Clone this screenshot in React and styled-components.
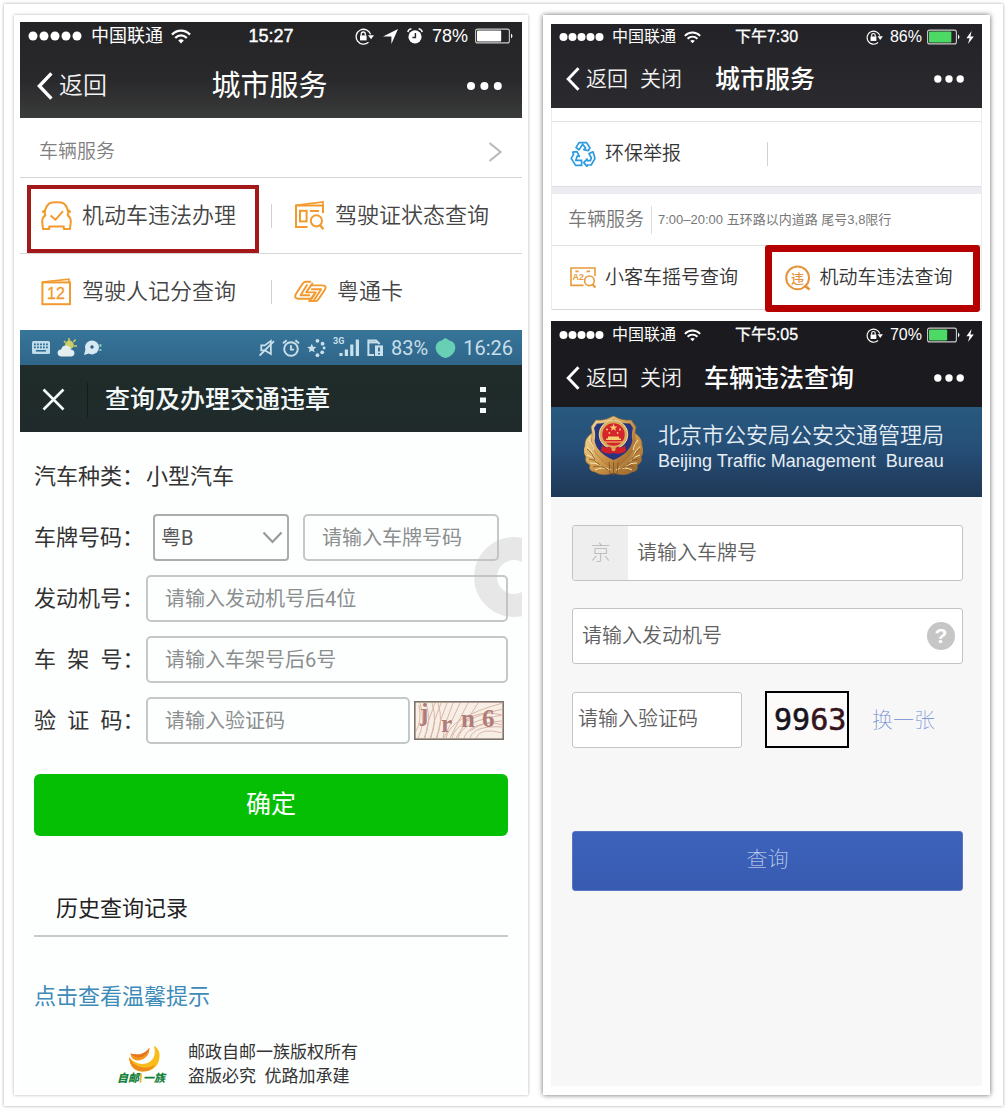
import React, { useState } from 'react'
import styled, { createGlobalStyle, css } from 'styled-components'

const GlobalStyle = createGlobalStyle`
    * {
        box-sizing: border-box;
    }

    body {
        margin: 0;
        background: #fff;
        font-family: 'Liberation Sans', 'Noto Sans CJK SC', sans-serif;
        color: #444;
    }

    button, input, select {
        font-family: inherit;
    }

    svg {
        display: block;
        flex: none;
    }
`

/* ---------- page ---------- */

const Frame = styled.main`
    display: grid;
    grid-template-columns: 514fr 447fr;
    gap: 15px;
    margin: 4px;
    padding: 11px 13px 11px 10px;
    background: #fff;
    box-shadow: 0 0 3px rgba(0, 0, 0, 0.35);
`

const Card = styled.section`
    display: flex;
    flex-direction: column;
    min-width: 0;
    padding: ${props => props.$raised ? '9px 8px' : '7px 6px'};
    background: #fff;
    box-shadow: ${props => props.$raised ? '0 0 5px rgba(0, 0, 0, 0.6)' : '0 0 3px rgba(0, 0, 0, 0.3)'};
`

/* ---------- iOS header ---------- */

const Header = styled.header`
    background: ${props => props.$background};
    color: #fff;
`

const StatusBar = styled.div`
    display: grid;
    grid-template-columns: 1fr auto 1fr;
    align-items: center;
    height: ${props => props.$large || props.$roomy ? 28 : 26}px;
    padding: 0 8px;
    font-size: ${props => props.$large ? 18 : 16}px;
    line-height: 24px;
`

const StatusGroup = styled.div`
    display: flex;
    align-items: center;
    gap: 8px;
    ${props => props.$end && css`
        justify-content: flex-end;
        gap: ${props.$large ? 9 : 7}px;
    `}
`

const Clock = styled.time`
    -webkit-text-stroke: ${props => props.$large ? '0.4px' : '0.3px'} #fff;
`

const Power = styled.div`
    display: flex;
    align-items: center;
    gap: ${props => props.$large ? 7 : 5}px;
`

const NavBar = styled.nav`
    display: grid;
    grid-template-columns: 1fr auto 1fr;
    align-items: center;
    height: ${props => props.$large ? 68 : 58}px;
    padding: ${props => props.$large ? '4px 20px 0 17px' : '0 18px 0 15px'};
`

const NavActions = styled.div`
    display: flex;
    align-items: center;
    gap: 12px;
    padding-right: 22px;
`

const NavButton = styled.button`
    display: flex;
    align-items: center;
    gap: 6px;
    padding: 0;
    border: 0;
    background: none;
    color: #f2f2f2;
    font-size: ${props => props.$large ? 24 : 21}px;
    line-height: 32px;
    font-weight: 350;
    white-space: nowrap;
`

const MoreButton = styled.button`
    justify-self: end;
    padding: 8px 0;
    border: 0;
    background: none;
`

const NavTitle = styled.h1`
    margin: 0;
    font-size: ${props => props.$large ? 29 : 25}px;
    line-height: 36px;
    font-weight: ${props => props.$large ? 400 : 500};
    white-space: nowrap;
`

const SignalDots = ({ large }) => {
    const r = large ? 4.5 : 4
    const pitch = large ? 11 : 9
    return (
        <svg width={pitch * 5} height="10">
            {[0, 1, 2, 3, 4].map(i => (
                <circle key={i} cx={pitch * i + r + 0.5} cy="5" r={r} fill="#fff" />
            ))}
        </svg>
    )
}

const Wifi = ({ large }) => (
    <svg width={large ? 20 : 17} height={large ? 15 : 13} viewBox="0 0 20 15" fill="none" stroke="#fff" strokeWidth="2.3">
        <path d="M1 5.6C6 .4 14 .4 19 5.6" />
        <path d="M4.2 9C7.6 5.6 12.4 5.6 15.8 9" />
        <path d="M7.2 11.4C9 10 11 10 12.8 11.4L10 14.4Z" fill="#fff" stroke="none" />
    </svg>
)

const RotationLock = ({ large }) => (
    <svg width={large ? 19 : 17} height={large ? 17 : 15} viewBox="0 0 19 17" fill="none" stroke="#fff" strokeWidth="1.3">
        <path d="M13.5 14.2A7.4 7.4 0 1 1 15.6 6.4" />
        <path d="M13 7.2h6l-3 4z" fill="#fff" stroke="none" />
        <rect x="5" y="7.4" width="6.6" height="5" fill="#fff" stroke="none" />
        <path d="M6.3 7.6V6a2 2 0 0 1 4 0v1.6" />
    </svg>
)

const LocationArrow = () => (
    <svg width="15" height="15" viewBox="0 0 15 15">
        <path d="M15 0L8.4 15V7.6H0Z" fill="#fff" />
    </svg>
)

const AlarmSolid = () => (
    <svg width="16" height="16" viewBox="0 0 16 16">
        <circle cx="8" cy="8.8" r="6.6" fill="#fff" />
        <path d="M8.4 5v4.4H5.4" fill="none" stroke="#28282a" strokeWidth="1.5" />
        <path d="M.8 4.2C1.2 2 2.6 1 4.4.8M15.2 4.2C14.8 2 13.4 1 11.6.8" fill="none" stroke="#fff" strokeWidth="1.4" />
    </svg>
)

const Battery = ({ level, large, charging }) => {
    const w = large ? 35 : 30
    return (
        <svg width={w + 4} height="16" viewBox={`0 0 ${w + 4} 16`}>
            <rect x=".6" y="1.1" width={w - 1.2} height="13.8" rx="2" fill="none" stroke="#ccc" strokeWidth="1.1" />
            <rect x="2" y="2.4" width={(w - 4) * level} height="11.2" rx="1" fill={charging ? '#4cd964' : '#fff'} />
            <path d={`M${w + 1} 5.6q3 2.4 0 4.8z`} fill="#fff" />
        </svg>
    )
}

const Bolt = () => (
    <svg width="8" height="13" viewBox="0 0 8 13">
        <path d="M5.6 0L.4 7.2H3.6L2 13L7.8 5.4H4.4Z" fill="#fff" />
    </svg>
)

const BackChevron = ({ large }) => (
    <svg width={large ? 16 : 14} height={large ? 28 : 24} viewBox="0 0 16 28">
        <path d="M14.4 1.4L2.4 14L14.4 26.6" fill="none" stroke="#fff" strokeWidth="3.4" />
    </svg>
)

const MoreDots = ({ large }) => (
    <svg width={large ? 35 : 30} height="8" viewBox={large ? '0 0 35 8' : '0 0 30 8'} fill="#fff">
        {[0, 1, 2].map(i => (
            <circle key={i} cx={large ? 4 + 13.4 * i : 3.8 + 11.2 * i} cy="4" r={large ? 4 : 3.7} />
        ))}
    </svg>
)

const PhoneHeader = ({ large, roomy, background, time, percent, charging, title, closable }) => (
    <Header $background={background}>
        <StatusBar $large={large} $roomy={roomy}>
            <StatusGroup>
                <SignalDots large={large} />
                <span>中国联通</span>
                <Wifi large={large} />
            </StatusGroup>
            <Clock $large={large}>{time}</Clock>
            <StatusGroup $end $large={large}>
                <RotationLock large={large} />
                {large && <LocationArrow />}
                {large && <AlarmSolid />}
                <Power $large={large}>
                    <span>{percent}%</span>
                    <Battery level={percent / 100} large={large} charging={charging} />
                    {charging && <Bolt />}
                </Power>
            </StatusGroup>
        </StatusBar>
        <NavBar $large={large}>
            <NavActions>
                <NavButton type="button" $large={large}>
                    <BackChevron large={large} />
                    返回
                </NavButton>
                {closable && <NavButton type="button">关闭</NavButton>}
            </NavActions>
            <NavTitle $large={large}>{title}</NavTitle>
            <MoreButton type="button" aria-label="更多">
                <MoreDots large={large} />
            </MoreButton>
        </NavBar>
    </Header>
)

/* ---------- service lists ---------- */

const SectionRow = styled.a`
    display: flex;
    align-items: center;
    justify-content: space-between;
    height: 60px;
    padding: 8px 20px 0 19px;
    border-bottom: 1px solid #d6d6d6;
    color: #808080;
    font-size: 19px;
    line-height: 28px;
    font-weight: 350;
    text-decoration: none;
`

const Services = styled.div`
    display: grid;
    grid-template-columns: 1fr 1fr;
    border-bottom: 1px solid ${props => props.$last ? 'transparent' : '#d6d6d6'};
`

const Service = styled.a`
    position: relative;
    display: flex;
    align-items: center;
    gap: ${props => props.$small ? 9 : 10}px;
    height: ${props => props.$small ? 63 : 75}px;
    padding-left: ${props => props.$small ? 18 : 21}px;
    color: ${props => props.$small ? '#333' : '#444'};
    font-size: ${props => props.$small ? 19 : 22}px;
    line-height: 32px;
    font-weight: 350;
    text-decoration: none;
    white-space: nowrap;

    &:last-child {
        padding-left: ${props => props.$small ? 18 : 23}px;
    }

    &:last-child::before {
        content: '';
        position: absolute;
        left: 0;
        width: 1px;
        height: 24px;
        background: #d2d2d2;
    }
`

const Marker = styled.span`
    position: absolute;
    pointer-events: none;
    ${props => props.$bold ? css`
        inset: -1px 1px -3px -2px;
        border: 7px solid #b60000;
        border-radius: 3px;
    ` : css`
        inset: 7px 12px 0 7px;
        border: 4px solid #a3181b;
    `}
`

const ListPanel = styled.div`
    margin-bottom: 11px;
    padding-top: 13px;
    border: solid #ececec;
    border-width: 0 1px;
`

const Divided = styled.div`
    border-top: 1px solid #e2e2e2;
`

const Band = styled.div`
    height: 8px;
    border-top: 1px solid #dcdce2;
    background: #ebebf1;
`

const NoticeRow = styled.div`
    display: flex;
    align-items: center;
    gap: 7px;
    height: 51px;
    padding-left: 16px;
    color: #777;
    font-size: 19px;
    line-height: 28px;
    font-weight: 350;
    white-space: nowrap;
`

const Notice = styled.span`
    padding-left: 6px;
    border-left: 1px solid #ddd;
    font-size: 13px;
    font-weight: 400;
`

const CarIcon = () => (
    <svg width="31" height="30" viewBox="0 0 31 30" fill="none" stroke="#f29a2e" strokeWidth="2" strokeLinejoin="round">
        <path d="M3.8 11.4C4.8 5 6.6 2 11 1.4Q15.500 1 20 1.400C24.400 2 26.200 5 27.200 11.400" />
        <path d="M3.8 11.4L4.2 14.4C2 16 1.2 17.4 1.2 20.6L2 28H8.2V25.4H22.8V28H29L29.8 20.6C29.8 17.4 29 16 26.8 14.4L27.2 11.4" />
        <path d="M1.4 11.4L4.4 9.400M29.600 11.400L26.600 9.400" strokeWidth="2.6" />
        <path d="M9.6 14.6L14.4 18.8L22 10.2" />
    </svg>
)

const LicenceIcon = () => (
    <svg width="31" height="30" viewBox="0 0 31 30" fill="none" stroke="#f29a2e" strokeWidth="2">
        <path d="M13.6 26H2V4.6H29V12" />
        <path d="M2 4.4L29 1V4.6" strokeWidth="1.6" />
        <rect x="6" y="9.8" width="6.6" height="10.6" />
        <path d="M16 10H25" />
        <circle cx="22.4" cy="19.8" r="5.6" />
        <path d="M26 24L29.4 28.2" strokeWidth="2.4" />
    </svg>
)

const PointsIcon = () => (
    <svg width="31" height="30" viewBox="0 0 31 30" fill="none" stroke="#f29a2e" strokeWidth="2">
        <rect x="1.4" y="5.4" width="27.6" height="21.8" />
        <path d="M1.4 5L28 2.2V5" strokeWidth="1.6" />
        <text x="15" y="22" textAnchor="middle" fontSize="16" fill="#f29a2e" stroke="#f29a2e" strokeWidth=".3">12</text>
    </svg>
)

const CardPassIcon = () => (
    <svg width="33" height="24" viewBox="0 0 34 24" fill="none" stroke="#f29a2e" strokeWidth="2" strokeLinejoin="round">
        <path d="M17.6 1.4H12.4Q10.6 1.4 9.2 3L1.8 14.4Q0 18.4 4 19H18.4L22.4 12.4H12.6L19.4 2.6" />
        <path d="M16.8 5.2H29.4Q34 5.4 31.8 9.6L25.4 19.2Q24 21.4 22 21.4H15.6L21 14.2" />
        <path d="M13.6 4.2L6.8 15.4H16.6M17.6 9.2H28L19.6 22" />
    </svg>
)

const RecycleIcon = () => (
    <svg width="26" height="26" viewBox="0 0 26 26" fill="none" stroke="#2c9ae0" strokeWidth="1.7" strokeLinejoin="round">
        <path d="M6 6.6L9 1.6H16.6L20 7L18.2 9.6L13.8 8.6L15.6 6.8L12.6 3.4L9 8.8Z" />
        <path d="M2.6 11.2L7 10.6L9.4 15.4L7.2 15L5.8 19.4H11.6V24.4H5.6L1.2 17.4L3.6 13.4Z" />
        <path d="M19 12.6L23 10.8L25 17.4L21.2 24H17V25.4L13.8 21.6L17 18V19.6H20.4L21.4 17Z" />
    </svg>
)

const LotteryIcon = () => (
    <svg width="26" height="22" viewBox="0 0 26 22" fill="none" stroke="#e99a3a" strokeWidth="1.6">
        <path d="M13.6 18.4H1V1H25V9" />
        <path d="M5.4 4.4H8.6M16.6 4.4H20" />
        <text x="2.6" y="13.4" fontSize="9" fontWeight="700" fill="#e99a3a" stroke="none">A2</text>
        <circle cx="19.4" cy="13.8" r="4.8" />
        <path d="M22.6 17.4L25.4 20.6" strokeWidth="2.2" />
    </svg>
)

const ViolationIcon = () => (
    <svg width="26" height="26" viewBox="0 0 26 26" fill="none" stroke="#e5933a" strokeWidth="2">
        <circle cx="12.6" cy="12.8" r="11.4" />
        <path d="M19.4 20.4L24.6 24.6" strokeWidth="2.6" />
        <text x="12.6" y="17.6" textAnchor="middle" fontSize="13" fontWeight="500" fill="#e5933a" stroke="none">违</text>
    </svg>
)

/* ---------- Android screen ---------- */

const Screen = styled.div`
    position: relative;
    flex: 1;
    overflow: hidden;
    background: #fdfefe;
    font-family: Roboto, 'Noto Sans CJK SC', sans-serif;
`

const AndroidStatus = styled.div`
    display: flex;
    align-items: center;
    justify-content: space-between;
    height: 35px;
    padding: 0 9px 0 12px;
    background: linear-gradient(#37759a, #2f6689);
    color: #c9dfe9;
    font-size: 20px;
    line-height: 24px;
`

const AndroidIcons = styled.div`
    display: flex;
    align-items: center;
    gap: 7px;
`

const AndroidBar = styled.header`
    display: flex;
    align-items: center;
    height: 67px;
    padding: 2px 33px 0 22px;
    background: linear-gradient(#1f2c29, #202a2b);
    color: #f3f8f8;
`

const IconButton = styled.button`
    padding: 0;
    border: 0;
    background: none;
`

const AndroidTitle = styled.h2`
    flex: 1;
    margin: 0 0 0 22px;
    padding-left: 17px;
    border-left: 1px solid #121b1a;
    font-size: 25px;
    line-height: 34px;
    font-weight: 500;
`

const QueryForm = styled.form`
    display: grid;
    grid-template-columns: 112px 1fr;
    grid-template-rows: repeat(5, 47px);
    row-gap: 14px;
    align-items: center;
    padding: 21px 14px 0;
    color: #333;
    font-size: 22px;
    line-height: 32px;
`

const FieldLabel = styled.label`
    white-space: nowrap;
`

const FieldGroup = styled.div`
    display: flex;
    align-items: center;
    min-width: 0;
    padding: ${props => props.$plate ? '0 9px 0 7px' : '0 4px 0 0'};
    gap: ${props => props.$plate ? 14 : 4}px;
`

const Field = styled.input`
    flex: 1;
    width: 100%;
    min-width: 0;
    height: 47px;
    padding: 0 17px;
    border: 2px solid #c4c8c7;
    border-radius: 5px;
    background: transparent;
    color: #333;
    font-size: 20px;

    &::placeholder {
        color: #8b8f8f;
        opacity: 1;
    }
`

const SelectBox = styled.div`
    position: relative;
    width: 136px;

    svg {
        position: absolute;
        top: 17px;
        right: 6px;
        pointer-events: none;
    }
`

const ProvinceSelect = styled.select`
    appearance: none;
    width: 100%;
    height: 47px;
    padding: 0 6px;
    border: 2px solid #a9adac;
    border-radius: 4px;
    background: transparent;
    color: #555;
    font-size: 20px;
`

const ConfirmButton = styled.button`
    grid-column: 1 / -1;
    height: 62px;
    margin-top: 16px;
    border: 0;
    border-radius: 6px;
    background: #05bf05;
    color: #fff;
    font-size: 25px;
    line-height: 34px;
`

const History = styled.section`
    margin: 45px 14px 0;
    border-bottom: 2px solid #c8cac9;
`

const HistoryTitle = styled.h3`
    margin: 0;
    padding: 11px 22px 9px;
    color: #222;
    font-size: 22px;
    line-height: 34px;
    font-weight: 400;
`

const TipsLink = styled.a`
    display: block;
    margin: 45px 14px 28px;
    color: #3c8bb8;
    font-size: 22px;
    line-height: 30px;
    text-decoration: none;
`

const Copyright = styled.footer`
    display: flex;
    align-items: center;
    gap: 20px;
    padding-left: 97px;
    color: #333;
    font-size: 17px;
    line-height: 24px;
`

/* the floating ring hangs off the right edge of the screen */
const FloatingRing = styled.div`
    position: absolute;
    top: 207px;
    right: -32px;
    width: 80px;
    height: 80px;
    border: 23px solid rgba(190, 192, 192, 0.36);
    border-radius: 50%;
    pointer-events: none;
`

const KeyboardIcon = () => (
    <svg width="18" height="13" viewBox="0 0 18 13">
        <rect width="18" height="13" rx="1.5" fill="#bfdcea" />
        <path d="M2 3.4H16M2 6.4H16" stroke="#2f6d93" strokeWidth="1.6" strokeDasharray="1.8 1.2" />
        <path d="M4 9.8H14" stroke="#2f6d93" strokeWidth="1.6" />
    </svg>
)

const WeatherIcon = () => (
    <svg width="20" height="19" viewBox="0 0 20 19">
        <path d="M12 0v3M18.6 1.6L16.4 4M7 3L8.6 4.6M17 8h3" stroke="#d9c96b" strokeWidth="1.5" />
        <circle cx="12.4" cy="7" r="4.4" fill="#c9cf62" />
        <path d="M4 18.4Q.4 18 .6 14.6Q1 11.6 4.2 11.6Q5 7.4 9.4 7.6Q13.4 8 13.8 11.6Q17.6 12 17.4 15.4Q17 18.4 14 18.4Z" fill="#e4eef0" />
    </svg>
)

const DiscIcon = () => (
    <svg width="18" height="16" viewBox="0 0 18 16">
        <circle cx="8" cy="7.4" r="7" fill="#d7e9f2" />
        <circle cx="8" cy="7" r="1.7" fill="#2f5f7e" />
        <path d="M0 15L1.4 9.8L5 13.6Z" fill="#d7e9f2" />
        <path d="M16.4 4V7M16.4 9V11" stroke="#7fc3bd" strokeWidth="2" />
    </svg>
)

const MuteIcon = () => (
    <svg width="16" height="18" viewBox="0 0 17 18" fill="none" stroke="#c9dfe9" strokeWidth="1.9">
        <path d="M2.4 6.2H6L12.6 1.6V15.4L6.4 11.6H2.4Z" />
        <path d="M.6 17L16 1.6" />
    </svg>
)

const AlarmOutline = () => (
    <svg width="18" height="18" viewBox="0 0 18 18" fill="none" stroke="#c9dfe9" strokeWidth="1.9">
        <circle cx="9" cy="10" r="6.8" />
        <path d="M9 6.2V10.6H12M1 4.4L4.6 1.2M17 4.4L13.4 1.2" />
    </svg>
)

const SparkIcon = () => (
    <svg width="19" height="20" viewBox="0 0 20 20" fill="#c9dfe9">
        <path d="M5 5.4L6.4 8.6L9.8 9L7.2 11.2L8 14.6L5 12.8L2 14.6L2.8 11.2L.2 9L3.6 8.6Z" />
        <circle cx="11" cy="2.4" r="2" />
        <circle cx="16.4" cy="5.4" r="2" />
        <circle cx="18" cy="10" r="1.5" />
        <circle cx="16" cy="14.6" r="2" />
        <circle cx="11" cy="17.6" r="2" />
    </svg>
)

const SignalIcon = () => (
    <svg width="27" height="22" viewBox="0 0 27 22">
        <text x="0" y="7" fontSize="9" fontWeight="700" fill="#c9dfe9">3G</text>
        <path d="M8 19V16M13.4 19V12.6M18.8 19V7.6M24.4 19V2.4" stroke="#c9dfe9" strokeWidth="3.2" />
    </svg>
)

const SimIcon = () => (
    <svg width="17" height="18" viewBox="0 0 17 18" fill="none" stroke="#c9dfe9" strokeWidth="2">
        <path d="M7 16H1.4V1.4H9L12.6 5" />
        <path d="M2 3.4H11" />
        <rect x="8" y="6.4" width="8" height="10.6" fill="#c9dfe9" stroke="none" />
        <path d="M12 8.6V12.4M12 14V15.4" stroke="#2f6d93" strokeWidth="1.8" />
    </svg>
)

const GreenBattery = () => (
    <svg width="21" height="22" viewBox="0 0 22 22">
        <path d="M11 .6Q13 1.4 14.6 3Q21 4.4 21.4 11Q20.6 19 11 21.6Q1.4 19 .6 11Q1 4.4 7.4 3Q9 1.4 11 .6Z" fill="#67d0b4" />
    </svg>
)

const PostLogo = () => (
    <svg width="51" height="40" viewBox="0 0 51 40">
        <path d="M12 13Q13 27 26 27.6Q41.6 27 42.6 12Q42.6 5 37 1.6Q40.4 16 29 19.6Q19 21.6 12 13Z" fill="#f9bd1a" />
        <path d="M12 13Q13 27 26 27.6Q34 27.2 38.4 21Q31 25 24 23Q16 21 12 13Z" fill="#ee8a1c" />
        <path d="M13.4 9.4Q14.6 16.8 22 16.6Q32.4 15 32.6 3.6Q28.4 9.6 22.6 10.4Q18 11 13.4 9.4Z" fill="#f39a1e" />
        <path d="M13.4 9.4Q18 11 22.6 10.4Q28.4 9.6 32.6 3.6Q31 12.6 22 13.4Q16.6 13.4 13.4 9.4Z" fill="#ea7420" />
        <text x="0" y="38" fontSize="11" fontWeight="900" fontStyle="italic" fill="#17823d">自邮</text>
        <path d="M24 29.5L23.4 38.5" stroke="#e8b52a" strokeWidth="1.8" />
        <text x="26" y="38" fontSize="11" fontWeight="900" fontStyle="italic" fill="#17823d">一族</text>
    </svg>
)

const WavyCaptcha = () => (
    <svg width="90" height="39" viewBox="0 0 90 39" role="img" aria-label="jrn6">
        <rect x=".8" y=".8" width="88.4" height="37.4" fill="#f7efe6" stroke="#7d7168" strokeWidth="1.6" />
        <g fill="none" stroke="#dbb5a8" strokeWidth="1">
            {[4, 10, 16, 22].map(x => (
                <path key={x} d={`M${x} 37Q${x + 8} 22 ${x + 2} 2M${x + 7} 37Q${x + 9} 20 ${x + 17} 2`} />
            ))}
            {[0, 6, 12, 18, 24, 30].map(y => (
                <path key={y} d={`M${32 + y} 37Q${36 + y} ${16 + y / 3} 89 ${y + 2}`} />
            ))}
            <path d="M30 37L46 2M36 37L54 2M42 37L64 2M50 20Q66 8 89 14M56 30Q72 18 89 24M2 30Q8 20 5 4" />
        </g>
        <g fill="#b07c78" fontFamily="'Liberation Serif', serif" fontWeight="700" fontSize="25">
            <text x="6" y="20">j</text>
            <text x="27" y="31">r</text>
            <text x="47" y="26">n</text>
            <text x="68" y="26">6</text>
        </g>
    </svg>
)

/* ---------- Beijing traffic screen ---------- */

const Banner = styled.div`
    display: flex;
    align-items: flex-start;
    gap: 15px;
    height: 90px;
    padding: 8px 0 0 33px;
    background: linear-gradient(#28597f, #264f78 45%, #1f3756);
    color: #e6eef5;
    white-space: pre;
`

const BureauNames = styled.div`
    padding-top: 8px;
    font-size: 22px;
    line-height: 26px;
    font-weight: 350;
`

const EnglishName = styled.div`
    font-size: 18px;
    line-height: 24px;
    font-weight: 400;
`

const TrafficForm = styled.form`
    flex: 1;
    display: flex;
    flex-direction: column;
    gap: 27px;
    padding: 28px 19px 0 21px;
    background: #f7f7f7;
`

const InputShell = styled.div`
    display: flex;
    align-items: center;
    flex: ${props => props.$width ? 'none' : 'initial'};
    width: ${props => props.$width || 'auto'};
    height: 56px;
    overflow: hidden;
    border: 1px solid #c4c4c4;
    border-radius: 3px;
    background: #fff;
`

const Prefix = styled.label`
    display: flex;
    align-items: center;
    justify-content: center;
    align-self: stretch;
    width: 55px;
    background: #eee;
    color: #999;
    font-size: 20px;
    line-height: 28px;
    font-weight: 100;
`

const PlainInput = styled.input`
    flex: 1;
    min-width: 0;
    height: 100%;
    padding: 0 ${props => props.$tight ? 5 : 9}px;
    border: 0;
    background: none;
    color: #333;
    font-size: 20px;
    font-weight: 350;

    &::placeholder {
        color: #606060;
        opacity: 1;
    }
`

const HelpButton = styled.button`
    width: 28px;
    height: 28px;
    margin-right: 7px;
    padding: 0;
    border: 0;
    border-radius: 50%;
    background: #c6c6c6;
    color: #fff;
    font-size: 21px;
    line-height: 28px;
    font-weight: 700;
`

const CaptchaRow = styled.div`
    display: flex;
    align-items: center;
    gap: 23px;
`

const RefreshLink = styled.a`
    color: #6b88d4;
    font-size: 21px;
    line-height: 24px;
    font-weight: 100;
    text-decoration: none;
`

const QueryButton = styled.button`
    height: 60px;
    margin-top: 56px;
    padding: 0 0 4px;
    border: 1px solid #5876c2;
    border-radius: 3px;
    background: linear-gradient(#3c62bb, #385bb0);
    color: #dbe4fa;
    font-size: 21px;
    line-height: 28px;
    font-weight: 100;
`

const PoliceEmblem = () => (
    <svg width="59" height="62" viewBox="0 0 59 62">
        <defs>
            <linearGradient id="gold" x1="0" y1="0" x2="1" y2="1">
                <stop offset="0" stopColor="#f3dc9c" />
                <stop offset=".5" stopColor="#cf9a4c" />
                <stop offset="1" stopColor="#8f5a24" />
            </linearGradient>
        </defs>
        <g fill="url(#gold)" stroke="#9c6c35" strokeWidth=".6">
            <path d="M8 18Q0 24 1 31Q-2 36 2 42Q0 47 6 50Q4 56 11 57Q18 62 29.5 58Q41 62 48 57Q55 56 53 50Q59 47 57 42Q61 36 58 31Q59 24 51 18Z" />
            <path d="M29.5 1L36 4Q43 6 47 5L52 12Q50 18 51.5 26Q50 42 29.5 54Q9 42 7.5 26Q9 18 7 12L12 5Q16 6 23 4Z" />
        </g>
        <path d="M29.5 4.5Q38 9 46 8.5L49 13Q47 19 48.4 26Q46 38 29.5 45Q13 38 10.6 26Q12 19 10 13L13 8.5Q21 9 29.5 4.5Z" fill="#27347f" />
        <circle cx="29.5" cy="19.5" r="14.3" fill="#d7ab5e" stroke="#f1d99a" />
        <circle cx="29.5" cy="19.5" r="11.2" fill="#d5242b" />
        <path d="M29.5 8.8L30.6 11.4L33.4 11.5L31.2 13.2L32 15.8L29.5 14.3L27 15.8L27.8 13.2L25.6 11.5L28.4 11.4Z" fill="#f5d070" />
        <g fill="#f5d070">
            <circle cx="23" cy="14.6" r="1" />
            <circle cx="36" cy="14.6" r="1" />
            <circle cx="25.4" cy="18" r=".9" />
            <circle cx="33.6" cy="18" r=".9" />
            <path d="M22 25V23.5H24V21.4H35V23.5H37V25Z" />
            <path d="M20.5 27H38.5" stroke="#f5d070" />
        </g>
        <path d="M18 30Q21 34 25 31.6L29.5 34L34 31.6Q38 34 41 30L42 36Q36 40 29.5 38Q23 40 17 36Z" fill="#cf1f29" />
        <circle cx="29.5" cy="34" r="2.2" fill="#d9a955" />
        <g fill="none" stroke="#f6e3ae" strokeWidth="1">
            <path d="M2.5 31Q8 35 10 42M3 40Q9 41 13 47M6 48Q12 47 18 52M11 55Q18 51 27 55" />
            <path d="M56.5 31Q51 35 49 42M56 40Q50 41 46 47M53 48Q47 47 41 52M48 55Q41 51 32 55" />
            <path d="M5 25Q9 29 10 35M54 25Q50 29 49 35" />
        </g>
        <g fill="none" stroke="#80511f" strokeWidth=".8">
            <path d="M3 34Q9 38 11 45M5 44Q11 44 16 50M9 52Q16 49 24 55" />
            <path d="M56 34Q50 38 48 45M54 44Q48 44 43 50M50 52Q43 49 35 55" />
            <path d="M25 47L26 60M29.5 47V61M34 47L33 60" />
        </g>
    </svg>
)

const NumberCaptcha = () => (
    <svg width="84" height="57" viewBox="0 0 84 57" role="img" aria-label="9963">
        <rect x="1" y="1" width="82" height="55" fill="#fdfafa" stroke="#000" strokeWidth="2" />
        <text x="9" y="39" fontFamily="'DejaVu Sans Mono', monospace" fontSize="30" fill="#16131c" stroke="#16131c" strokeWidth=".6">
            99<tspan fill="#35141a" stroke="#35141a">63</tspan>
        </text>
    </svg>
)

const AndroidScreen = () => {
    const [form, setForm] = useState({ province: '粤B', plate: '', engine: '', frame: '', code: '' })

    const onChange = event => {
        const { name, value } = event.target
        setForm({ ...form, [name]: value })
    }

    return (
        <Screen>
            <AndroidStatus>
                <AndroidIcons>
                    <KeyboardIcon />
                    <WeatherIcon />
                    <DiscIcon />
                </AndroidIcons>
                <AndroidIcons>
                    <MuteIcon />
                    <AlarmOutline />
                    <SparkIcon />
                    <SignalIcon />
                    <SimIcon />
                    <span>83%</span>
                    <GreenBattery />
                    <time>16:26</time>
                </AndroidIcons>
            </AndroidStatus>
            <AndroidBar>
                <IconButton type="button" aria-label="关闭">
                    <svg width="23" height="23" viewBox="0 0 23 23">
                        <path d="M1.5 1.5L21.5 21.5M21.5 1.5L1.5 21.5" stroke="#f3f8f8" strokeWidth="2.6" />
                    </svg>
                </IconButton>
                <AndroidTitle>查询及办理交通违章</AndroidTitle>
                <IconButton type="button" aria-label="菜单">
                    <svg width="12" height="28" viewBox="0 0 12 28" fill="#f3f8f8">
                        <path d="M3 1h6v5H3zM3 11.5h6v5H3zM3 22h6v5H3z" />
                    </svg>
                </IconButton>
            </AndroidBar>
            <QueryForm onSubmit={event => event.preventDefault()}>
                <span>汽车种类：</span>
                <span>小型汽车</span>

                <FieldLabel htmlFor="plate">车牌号码：</FieldLabel>
                <FieldGroup $plate>
                    <SelectBox>
                        <ProvinceSelect name="province" aria-label="车牌前缀" value={form.province} onChange={onChange}>
                            <option value="粤B">粤B</option>
                            <option value="粤A">粤A</option>
                        </ProvinceSelect>
                        <svg width="21" height="13" viewBox="0 0 21 13">
                            <path d="M1.5 1.5L10.5 11L19.5 1.5" fill="none" stroke="#999" strokeWidth="2.2" />
                        </svg>
                    </SelectBox>
                    <Field id="plate" name="plate" value={form.plate} onChange={onChange} placeholder="请输入车牌号码" />
                </FieldGroup>

                <FieldLabel htmlFor="engine">发动机号：</FieldLabel>
                <Field id="engine" name="engine" value={form.engine} onChange={onChange} placeholder="请输入发动机号后4位" />

                <FieldLabel htmlFor="frame">车&ensp;架&ensp;号：</FieldLabel>
                <Field id="frame" name="frame" value={form.frame} onChange={onChange} placeholder="请输入车架号后6号" />

                <FieldLabel htmlFor="code">验&ensp;证&ensp;码：</FieldLabel>
                <FieldGroup>
                    <Field id="code" name="code" value={form.code} onChange={onChange} placeholder="请输入验证码" />
                    <WavyCaptcha />
                </FieldGroup>

                <ConfirmButton type="submit">确定</ConfirmButton>
            </QueryForm>
            <History>
                <HistoryTitle>历史查询记录</HistoryTitle>
            </History>
            <TipsLink href="#tips">点击查看温馨提示</TipsLink>
            <Copyright>
                <PostLogo />
                <div>
                    邮政自邮一族版权所有<br />
                    盗版必究&nbsp; 优路加承建
                </div>
            </Copyright>
            <FloatingRing />
        </Screen>
    )
}

const TrafficQuery = () => {
    const [form, setForm] = useState({ bjPlate: '', bjEngine: '', bjCode: '' })

    const onChange = event => {
        const { name, value } = event.target
        setForm({ ...form, [name]: value })
    }

    return (
        <>
            <Banner>
                <PoliceEmblem />
                <BureauNames>
                    北京市公安局公安交通管理局
                    <EnglishName>{'Beijing Traffic Management  Bureau'}</EnglishName>
                </BureauNames>
            </Banner>
            <TrafficForm onSubmit={event => event.preventDefault()}>
                <InputShell>
                    <Prefix htmlFor="bjPlate">京</Prefix>
                    <PlainInput id="bjPlate" name="bjPlate" value={form.bjPlate} onChange={onChange} placeholder="请输入车牌号" />
                </InputShell>
                <InputShell>
                    <PlainInput name="bjEngine" aria-label="发动机号" value={form.bjEngine} onChange={onChange} placeholder="请输入发动机号" />
                    <HelpButton type="button">?</HelpButton>
                </InputShell>
                <CaptchaRow>
                    <InputShell $width="170px">
                        <PlainInput $tight name="bjCode" aria-label="验证码" value={form.bjCode} onChange={onChange} placeholder="请输入验证码" />
                    </InputShell>
                    <NumberCaptcha />
                    <RefreshLink href="#refresh">换一张</RefreshLink>
                </CaptchaRow>
                <QueryButton type="submit">查询</QueryButton>
            </TrafficForm>
        </>
    )
}

const App = () => {
    return (
        <>
            <GlobalStyle />
            <Frame>
                <Card>
                    <PhoneHeader
                        large
                        background="linear-gradient(#242426, #29292b 60%, #3a3b3b)"
                        time="15:27"
                        percent={78}
                        title="城市服务"
                    />
                    <SectionRow href="#vehicle">
                        车辆服务
                        <svg width="14" height="20" viewBox="0 0 14 20">
                            <path d="M1.5 1L12.5 10L1.5 19" fill="none" stroke="#bbb" strokeWidth="2.2" />
                        </svg>
                    </SectionRow>
                    <Services>
                        <Service href="#violation">
                            <CarIcon />
                            机动车违法办理
                            <Marker />
                        </Service>
                        <Service href="#licence">
                            <LicenceIcon />
                            驾驶证状态查询
                        </Service>
                    </Services>
                    <Services $last>
                        <Service href="#points">
                            <PointsIcon />
                            驾驶人记分查询
                        </Service>
                        <Service href="#card">
                            <CardPassIcon />
                            粤通卡
                        </Service>
                    </Services>
                    <AndroidScreen />
                </Card>

                <Card $raised>
                    <PhoneHeader
                        background="linear-gradient(#232327, #2b2b2f)"
                        time="下午7:30"
                        percent={86}
                        charging
                        closable
                        title="城市服务"
                    />
                    <ListPanel>
                        <Divided>
                            <Services $last>
                                <Service $small href="#environment">
                                    <RecycleIcon />
                                    环保举报
                                </Service>
                                <Service $small as="span" />
                            </Services>
                        </Divided>
                        <Band />
                        <NoticeRow>
                            车辆服务
                            <Notice>7:00–20:00 五环路以内道路 尾号3,8限行</Notice>
                        </NoticeRow>
                        <Divided>
                            <Services>
                                <Service $small href="#lottery">
                                    <LotteryIcon />
                                    小客车摇号查询
                                </Service>
                                <Service $small href="#query">
                                    <ViolationIcon />
                                    机动车违法查询
                                    <Marker $bold />
                                </Service>
                            </Services>
                        </Divided>
                    </ListPanel>
                    <PhoneHeader
                        roomy
                        background="#1b1a1e"
                        time="下午5:05"
                        percent={70}
                        charging
                        closable
                        title="车辆违法查询"
                    />
                    <TrafficQuery />
                </Card>
            </Frame>
        </>
    )
}

export default App
